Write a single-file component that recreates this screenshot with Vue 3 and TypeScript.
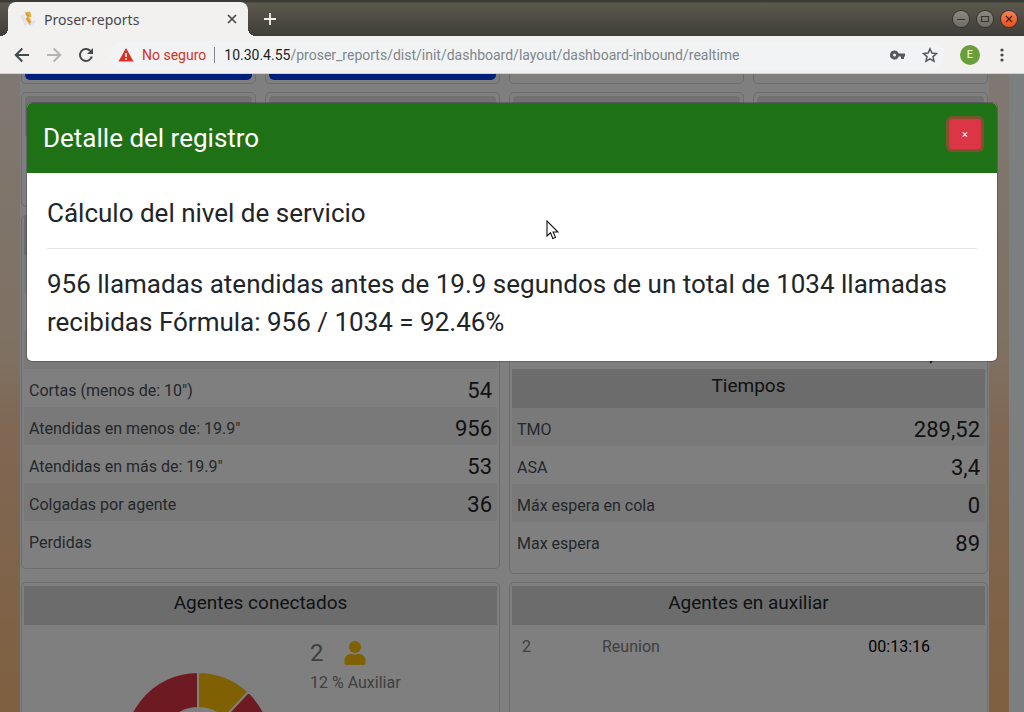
<script setup lang="ts">
interface Row { label: string; value: string }

const callRows: Row[] = [
  { label: '', value: '' },
  { label: '', value: '' },
  { label: '', value: '' },
  { label: 'Cortas (menos de: 10")', value: '54' },
  { label: 'Atendidas en menos de: 19.9"', value: '956' },
  { label: 'Atendidas en más de: 19.9"', value: '53' },
  { label: 'Colgadas por agente', value: '36' },
  { label: 'Perdidas', value: '' },
]
const levelRows: Row[] = [
  { label: '', value: '' },
  { label: '', value: '' },
  { label: '', value: '92,46 %' },
]
const timeRows: Row[] = [
  { label: 'TMO', value: '289,52' },
  { label: 'ASA', value: '3,4' },
  { label: 'Máx espera en cola', value: '0' },
  { label: 'Max espera', value: '89' },
]
const url = '/proser_reports/dist/init/dashboard/layout/dashboard-inbound/realtime'

const radius = 74
const hole = 38
function slice(from: number, to: number): string {
  const point = (r: number, deg: number) => {
    const a = (deg * Math.PI) / 180
    return `${(radius + r * Math.sin(a)).toFixed(2)} ${(radius - r * Math.cos(a)).toFixed(2)}`
  }
  const large = to - from > 180 ? 1 : 0
  return `M${point(radius, from)}A${radius} ${radius} 0 ${large} 1 ${point(radius, to)}L${point(hole, to)}A${hole} ${hole} 0 ${large} 0 ${point(hole, from)}Z`
}
</script>

<template>
  <div class="window">
    <header class="titlebar">
      <div class="tab">
        <svg class="favicon" width="16" height="16" viewBox="0 0 16 16" aria-hidden="true">
          <path d="M0 5l3-2 5 10-3 2z" fill="#dfe3ee" />
          <path d="M8 14l6-5 2 2-5 4z" fill="#dfe3ee" />
          <path d="M4.500 1.500L10 .5l1.500 5-2.500 1 2.500 4-2 3.500-4-6 1.500-2z" fill="#e8aa42" />
          <path d="M6 3l3 2M7.500 7.500l2.500 4" stroke="#c98f35" fill="none" />
        </svg>
        <span class="tab-title">Proser-reports</span>
        <button class="icon-btn tab-close" aria-label="Cerrar pestaña">
          <svg width="10" height="10" viewBox="0 0 10 10"><path d="M1 1l8 8M9 1l-8 8" stroke="#46494c" stroke-width="1.7" /></svg>
        </button>
      </div>
      <button class="icon-btn new-tab" aria-label="Nueva pestaña">
        <svg width="12" height="12" viewBox="0 0 12 12"><path d="M6 0v12M0 6h12" stroke="#f1f0ee" stroke-width="1.8" /></svg>
      </button>
      <div class="controls">
        <button class="ctl" aria-label="Minimizar"><svg width="10" height="10" viewBox="0 0 10 10"><path d="M1 5.5h8" stroke="#35342f" /></svg></button>
        <button class="ctl" aria-label="Maximizar"><svg width="10" height="10" viewBox="0 0 10 10"><path d="M1.5 2.5h7v5h-7z" fill="none" stroke="#35342f" stroke-width="1.2" /></svg></button>
        <button class="ctl ctl-close" aria-label="Cerrar"><svg width="10" height="10" viewBox="0 0 10 10"><path d="M2 2l6 6M8 2l-6 6" stroke="#4b2012" stroke-width="1.3" /></svg></button>
      </div>
    </header>

    <nav class="toolbar">
      <button class="icon-btn" aria-label="Atrás">
        <svg width="16" height="16" viewBox="0 0 16 16"><path d="M15 8H2M8.300 1.500L1.800 8l6.500 6.500" fill="none" stroke="#45484b" stroke-width="2" /></svg>
      </button>
      <button class="icon-btn" aria-label="Adelante">
        <svg width="16" height="16" viewBox="0 0 16 16"><path d="M1 8h13M7.700 1.500L14.200 8l-6.500 6.500" fill="none" stroke="#b4b4b3" stroke-width="2" /></svg>
      </button>
      <button class="icon-btn" aria-label="Recargar">
        <svg width="16" height="16" viewBox="0 0 16 16"><path d="M13.800 9.500A6 6 0 1 1 12.300 3.800" fill="none" stroke="#45484b" stroke-width="2" /><path d="M15 1v6H9z" fill="#45484b" /></svg>
      </button>
      <div class="omnibox">
        <svg width="16" height="14" viewBox="0 0 16 14" aria-hidden="true"><path d="M8 0l7.500 13.500H.5z" fill="#d93025" /><path d="M8 5v4M8 10.300v1.700" stroke="#fff" stroke-width="1.500" /></svg>
        <span class="unsafe">No seguro</span>
        <label class="host" for="address">10.30.4.55</label>
        <input id="address" class="address" type="text" :value="url" />
        <button class="icon-btn" aria-label="Contraseñas">
          <svg width="16" height="10" viewBox="0 0 16 10"><path d="M4.500.5a4.500 4.500 0 1 0 4.200 6H11V9h3V6.500h1v-3H8.700A4.500 4.500 0 0 0 4.500.5zm0 3a1.500 1.500 0 1 1 0 3 1.500 1.500 0 0 1 0-3z" fill="#55585c" fill-rule="evenodd" /></svg>
        </button>
        <button class="icon-btn" aria-label="Añadir a marcadores">
          <svg width="16" height="16" viewBox="0 0 16 16"><path d="M8 1.800l1.900 4.300 4.600.4-3.500 3.100 1 4.600L8 11.800l-4 2.400 1-4.600L1.500 6.500l4.600-.4z" fill="none" stroke="#55585c" stroke-width="1.500" /></svg>
        </button>
      </div>
      <div class="tools">
        <button class="avatar" aria-label="Perfil">E</button>
        <button class="icon-btn" aria-label="Menú">
          <svg width="16" height="16" viewBox="0 0 16 16"><g fill="#45484b"><circle cx="8" cy="3" r="1.600" /><circle cx="8" cy="8" r="1.600" /><circle cx="8" cy="13" r="1.600" /></g></svg>
        </button>
      </div>
    </nav>

    <div class="viewport">
      <div class="page">
        <main class="board">
          <section class="card kpi-end"><div class="blue"></div></section>
          <section class="card kpi-end"><div class="blue"></div></section>
          <section class="card kpi-end"></section>
          <section class="card kpi-end"></section>

          <section v-for="n in 4" :key="n" class="card kpi"><div class="strip"></div></section>

          <section class="card half calls">
            <div class="head"></div>
            <table class="data">
              <tbody>
                <tr v-for="(row, i) in callRows" :key="i"><th scope="row">{{ row.label }}</th><td>{{ row.value }}</td></tr>
              </tbody>
            </table>
          </section>
          <section class="card half times">
            <div class="head"></div>
            <table class="data">
              <tbody>
                <tr v-for="(row, i) in levelRows" :key="i" class="plain"><th scope="row">{{ row.label }}</th><td>{{ row.value }}</td></tr>
              </tbody>
            </table>
            <h2 class="head">Tiempos</h2>
            <table class="data">
              <tbody>
                <tr v-for="row in timeRows" :key="row.label"><th scope="row">{{ row.label }}</th><td>{{ row.value }}</td></tr>
              </tbody>
            </table>
          </section>

          <section class="card half agents">
            <h2 class="head">Agentes conectados</h2>
            <div class="agents-body">
              <svg class="donut" width="148" height="148" viewBox="0 0 148 148" role="img" aria-label="Agentes por estado">
                <path :d="slice(0, 43)" fill="#ffc107" stroke="#fff" stroke-width="2" />
                <path :d="slice(43, 360)" fill="#dc3545" stroke="#fff" stroke-width="2" />
              </svg>
              <div class="legend">
                <div class="legend-top">
                  <span class="count">2</span>
                  <svg width="22" height="24" viewBox="0 0 22 24" aria-hidden="true"><circle cx="11" cy="6" r="6" fill="#ffc107" /><path d="M6.500 13h1a9 9 0 0 0 7 0h1a6 6 0 0 1 6 6v3a2 2 0 0 1-2 2H2.500a2 2 0 0 1-2-2v-3a6 6 0 0 1 6-6z" fill="#ffc107" /></svg>
                </div>
                <div>12 % Auxiliar</div>
              </div>
            </div>
          </section>
          <section class="card half agents">
            <h2 class="head">Agentes en auxiliar</h2>
            <table class="aux">
              <tbody><tr><td class="qty">2</td><td>Reunion</td><td class="clock">00:13:16</td></tr></tbody>
            </table>
          </section>
        </main>
      </div>
      <div class="gutter"></div>

      <div class="backdrop">
        <div class="modal" role="dialog" aria-modal="true" aria-labelledby="detail-title">
          <div class="modal-head">
            <h1 id="detail-title" class="modal-title">Detalle del registro</h1>
            <button class="modal-close" aria-label="Cerrar detalle">×</button>
          </div>
          <div class="modal-body">
            <h2 class="modal-sub">Cálculo del nivel de servicio</h2>
            <hr />
            <p>956 llamadas atendidas antes de 19.9 segundos de un total de 1034 llamadas recibidas Fórmula: 956 / 1034 = 92.46%</p>
          </div>
        </div>
      </div>
      <svg class="pointer" width="13" height="20" viewBox="0 0 13 20" aria-hidden="true"><path d="M1 1v15l3.500-3.200 2.300 5.700 2.700-1.100-2.400-5.400H12z" fill="#fff" stroke="#111" stroke-width="1.100" /></svg>
    </div>
  </div>
</template>

<style>
html, body { margin: 0; overflow: hidden; }
</style>

<style scoped>
* { box-sizing: border-box; }
.window { height: 100vh; display: flex; flex-direction: column; font-family: Roboto, "Liberation Sans", sans-serif; font-size: 16px; color: #212529; }
button { padding: 0; border: 0; background: none; font-family: inherit; }
h1, h2, p { margin: 0; font-weight: 400; }
.icon-btn { display: flex; align-items: center; justify-content: center; }

.titlebar { flex: none; height: 36px; padding: 2px 7px 0 8px; display: flex; align-items: center; background: linear-gradient(#3c3b37 0, #3c3b37 2px, #5b5a4c 3px, #57524a 10px, #3e3d38 100%); }
.tab { position: relative; width: 240px; height: 34px; padding: 0 11px 0 12px; display: flex; align-items: center; gap: 8px; background: #f2f1f0; border-radius: 8px 8px 0 0; font-family: "Noto Sans", sans-serif; font-size: 14px; color: #45484b; }
.tab::before, .tab::after { content: ""; position: absolute; bottom: 0; width: 8px; height: 8px; }
.tab::before { right: 100%; background: radial-gradient(circle at 0 0, transparent 8px, #f2f1f0 8px); }
.tab::after { left: 100%; background: radial-gradient(circle at 100% 0, transparent 8px, #f2f1f0 8px); }
.tab-title { flex: 1; }
.new-tab { margin-left: 16px; }
.controls { margin-left: auto; display: flex; gap: 8px; }
.ctl { width: 16px; height: 16px; border-radius: 50%; display: flex; align-items: center; justify-content: center; background: linear-gradient(#8b897f, #6f6d65); box-shadow: 0 0 0 1px #35342f; }
.ctl-close { background: linear-gradient(#f58055, #e9511d); }

.toolbar { flex: none; height: 38px; padding: 0 14px; display: flex; align-items: center; gap: 16px; background: #f2f1f0; border-bottom: 1px solid #d5d3d0; font-size: 14px; }
.omnibox { flex: 1; height: 28px; padding: 0 6px 0 8px; display: flex; align-items: center; border-radius: 14px; background: #f1f3f4; }
.unsafe { margin-left: 8px; padding-right: 8px; border-right: 1px solid #80868b; line-height: 16px; color: #d93025; }
.host { margin-left: 9px; color: #202124; }
.address { flex: 1; min-width: 0; padding: 0; border: 0; outline: 0; background: none; font: inherit; color: #80868b; }
.omnibox .icon-btn { margin-left: 16px; }
.tools { display: flex; align-items: center; gap: 14px; }
.avatar { width: 20px; height: 20px; border-radius: 50%; background: #689f38; color: #fff; font-size: 11px; }

.viewport { position: relative; flex: 1; min-height: 0; display: flex; overflow: hidden; }
.page { flex: 1; padding: 0 20px; background: linear-gradient(#fff0e4 0, #ffe2c4 280px, #ffd0aa 350px, #ffc080 100%); }
.gutter { width: 15px; background: #f7ffff; }
.board { display: grid; grid-template-columns: repeat(4, 1fr); column-gap: 9px; row-gap: 8px; padding: 0 1px; background: #fff; }
.card { padding: 3px; border: 1px solid #dadada; border-radius: 5px; background: #fff; }
.half { grid-column: span 2; align-self: start; padding: 3px 2px; }
.kpi-end { height: 10px; padding-top: 0; border-top: 0; border-radius: 0 0 5px 5px; }
.blue { height: 6px; border-radius: 0 0 5px 5px; background: #043ff8; }
.kpi { height: 115px; }
.strip { height: 40px; border-radius: 4px 4px 0 0; background: #e2e2e2; }
.calls { height: 354px; }
.times { height: 359px; }
.calls, .times { padding-top: 0; }
.head { height: 39px; line-height: 34px; font-size: 19px; text-align: center; background: #d9d9d9; }
.data { width: 100%; border-collapse: collapse; }
.data tr { height: 38px; }
.data tr:nth-child(odd) { background: #f2f2f2; }
.data tr.plain { background: #fff; }
.data th, .data td { padding: 6px 5px 0; line-height: 24px; }
.data th { text-align: left; font-weight: 400; color: #495057; }
.data td { text-align: right; font-size: 22px; }
.agents { height: 240px; }
.agents-body { display: flex; gap: 38px; padding-left: 100px; color: #808080; }
.donut { margin-top: 47px; }
.legend { padding-top: 10px; line-height: 24px; }
.legend-top { display: flex; align-items: center; gap: 20px; height: 36px; }
.count { font-size: 24px; }
.aux { width: 100%; border-collapse: collapse; table-layout: fixed; color: #808080; }
.aux td { height: 42px; padding: 0 10px; }
.aux .qty { width: 80px; }
.aux .clock { padding-right: 55px; text-align: right; color: #000; }

.backdrop { position: absolute; inset: 0; padding: 29px 27px; background: rgba(0, 0, 0, .5); }
.modal { border-radius: 5px; background: #fff; overflow: hidden; box-shadow: 0 0 0 1px rgba(0, 0, 0, .2); }
.modal-head { display: flex; justify-content: space-between; align-items: flex-start; padding: 16px; background: #1e7115; color: #fff; }
.modal-title, .modal-sub, .modal-body p { font-size: 26px; line-height: 38px; }
.modal-close { width: 32px; height: 30px; border-radius: 3px; background: #dc3545; box-shadow: 0 0 0 3px rgba(220, 53, 69, .5); color: #fff; font-size: 11px; }
.modal-body { padding: 21px 20px 20px; }
.modal-body hr { margin: 16px 0; border: 0; border-top: 1px solid #e5e5e5; }
.pointer { position: absolute; left: 546px; top: 146px; }
</style>
